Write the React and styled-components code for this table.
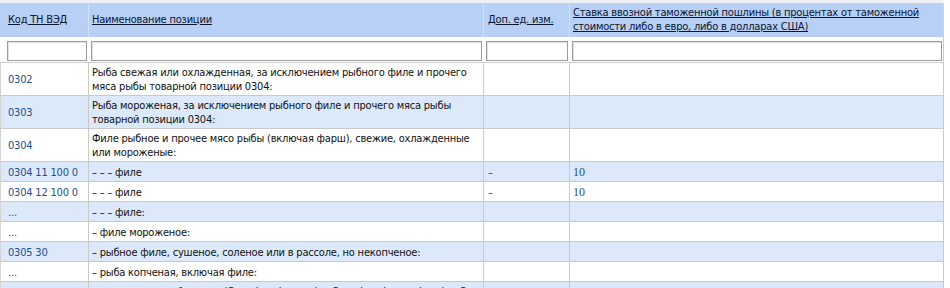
import React from "react";
import styled, { createGlobalStyle } from "styled-components";

const Global = createGlobalStyle`
  html, body { margin: 0; padding: 0; background: #ffffff; }
  body { font-family: "DejaVu Sans Condensed", "DejaVu Sans", sans-serif; font-size: 11px; }
`;

const Frame = styled.div`
  width: 950px;
  height: 288px;
  overflow: hidden;
  padding-top: 3px;
  background: #ffffff;
  box-sizing: border-box;
  position: relative;
`;

const TopStrip = styled.div`
  position: absolute;
  top: 0; left: 0; right: 6px;
  height: 3px;
  background: #eef1f6;
`;

const Table = styled.table`
  width: 944px;
  table-layout: fixed;
  border-collapse: separate;
  border-spacing: 0;
  font-family: "DejaVu Sans Condensed", "DejaVu Sans", sans-serif;
  font-size: 11px;
  line-height: 14px;
  letter-spacing: -0.2px;
`;

const HeadCell = styled.th`
  background: #b8d0f6;
  text-align: left;
  font-weight: normal;
  vertical-align: middle;
  padding: 3px 3px 3px ${p => p.$pl || 3}px;
  border-right: 1px solid ${p => (p.$last ? "#c8d6ea" : "#d2e1f8")};
  height: 28px;
`;

const HeadLink = styled.a`
  color: #0a1530;
  text-decoration: underline;
  cursor: pointer;
`;

const FilterCell = styled.td`
  padding: 4px ${p => p.$pr ?? 2}px 1px ${p => p.$pl ?? 2}px;
  border-bottom: 1px solid #cbcbcb;
  border-right: ${p => (p.$last ? "1px solid #cbcbcb" : "0")};
  background: #ffffff;
`;

const FilterInput = styled.input`
  display: block;
  width: 100%;
  height: 20px;
  box-sizing: border-box;
  border: 1px solid #9c9c9c;
  box-shadow: inset 1px 1px 0 #e2e2e2;
  background: #ffffff;
  margin: 0;
  padding: 0 2px;
  outline: none;
`;

const Row = styled.tr`
  background: ${p => (p.$alt ? "#dce9fb" : "#ffffff")};
`;

const Cell = styled.td`
  height: 15px;
  padding: 3px 3px 1px ${p => p.$pl ?? 3}px;
  vertical-align: middle;
  border-bottom: 1px solid #cacaca;
  border-right: 1px solid #cacaca;
  border-left: ${p => (p.$first ? "1px solid #d4d4d4" : "0")};
  color: ${p => (p.$link ? "#1d4f8e" : "#111111")};
  white-space: nowrap;
  overflow: hidden;
`;

const Num = styled.span`
  font-family: "Liberation Serif", serif;
  font-size: 12px;
  letter-spacing: 0;
  color: #1d4f8e;
`;

const rows = [
  { code: "0302", name: ["Рыба свежая или охлажденная, за исключением рыбного филе и прочего", "мяса рыбы товарной позиции 0304:"] },
  { code: "0303", name: ["Рыба мороженая, за исключением рыбного филе и прочего мяса рыбы", "товарной позиции 0304:"] },
  { code: "0304", name: ["Филе рыбное и прочее мясо рыбы (включая фарш), свежие, охлажденные", "или мороженые:"] },
  { code: "0304 11 100 0", name: ["– – – филе"], unit: "–", rate: "10" },
  { code: "0304 12 100 0", name: ["– – – филе"], unit: "–", rate: "10" },
  { code: "...", name: ["– – – филе:"] },
  { code: "...", name: ["– филе мороженое:"] },
  { code: "0305 30", name: ["– рыбное филе, сушеное, соленое или в рассоле, но некопченое:"] },
  { code: "...", name: ["– рыба копченая, включая филе:"] },
  { code: "...", name: ["– – тихоокеанский лосось (Oncorhynchus nerka, Oncorhynchus gorbuscha, Oncorhynchus", "keta, Oncorhynchus tschawytscha), копченый:"] },
];

export default function App() {
  return (
    <>
      <Global />
      <Frame>
        <TopStrip />
        <Table>
          <colgroup>
            <col style={{ width: 89 }} />
            <col style={{ width: 395 }} />
            <col style={{ width: 86 }} />
            <col style={{ width: 374 }} />
          </colgroup>
          <thead>
            <tr>
              <HeadCell $pl={8}><HeadLink>Код ТН ВЭД</HeadLink></HeadCell>
              <HeadCell><HeadLink>Наименование позиции</HeadLink></HeadCell>
              <HeadCell $pl={4}><HeadLink>Доп. ед. изм.</HeadLink></HeadCell>
              <HeadCell $last>
                <HeadLink>
                  Ставка ввозной таможенной пошлины (в процентах от таможенной
                  <br />
                  стоимости либо в евро, либо в долларах США)
                </HeadLink>
              </HeadCell>
            </tr>
            <tr>
              <FilterCell $pl={7}><FilterInput /></FilterCell>
              <FilterCell><FilterInput /></FilterCell>
              <FilterCell><FilterInput /></FilterCell>
              <FilterCell $pr={1} $last><FilterInput /></FilterCell>
            </tr>
          </thead>
          <tbody>
            {rows.map((r, i) => (
              <Row key={i} $alt={i % 2 === 1}>
                <Cell $first $pl={7} $link>{r.code}</Cell>
                <Cell>
                  {r.name.map((l, j) => (
                    <React.Fragment key={j}>
                      {j > 0 && <br />}
                      {l}
                    </React.Fragment>
                  ))}
                </Cell>
                <Cell $pl={4} $link>{r.unit || ""}</Cell>
                <Cell>{r.rate ? <Num>{r.rate}</Num> : ""}</Cell>
              </Row>
            ))}
          </tbody>
        </Table>
      </Frame>
    </>
  );
}
